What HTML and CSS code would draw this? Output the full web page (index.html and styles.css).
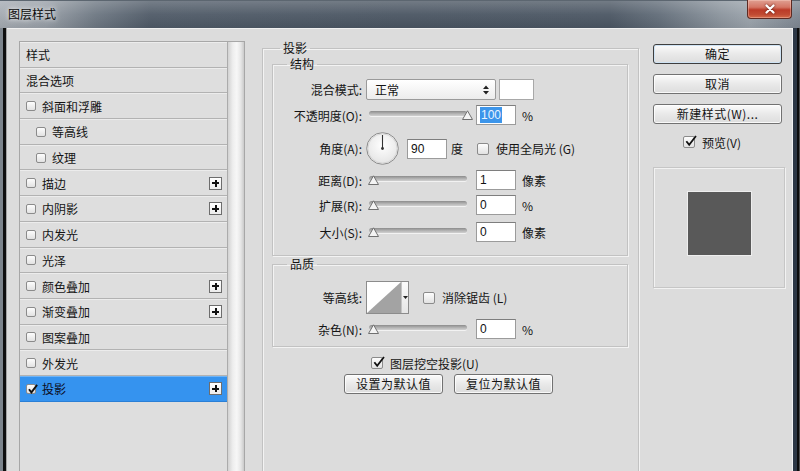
FILE: index.html
```html
<!DOCTYPE html>
<html lang="zh-CN">
<head>
<meta charset="utf-8">
<title>图层样式</title>
<link rel="stylesheet" href="styles.css">
</head>
<body>
<div class="window">
  <div class="titlebar">
    <span class="title">图层样式</span>
    <span class="close"><svg width="12" height="10" viewBox="0 0 12 10"><path d="M2.5 1.5 L9.5 8.5 M9.5 1.5 L2.5 8.5" stroke="#fff" stroke-width="2.2" stroke-linecap="round"/></svg></span>
  </div>
  <div class="frame">
    <div class="frame-left"></div>
    <div class="content">
      <div class="styles-panel">
        <ul class="style-list">
          <li class="style-item">样式</li>
          <li class="style-item">混合选项</li>
          <li class="style-item"><span class="cb"></span>斜面和浮雕</li>
          <li class="style-item sub"><span class="cb"></span>等高线</li>
          <li class="style-item sub"><span class="cb"></span>纹理</li>
          <li class="style-item"><span class="cb"></span>描边<span class="plus"></span></li>
          <li class="style-item"><span class="cb"></span>内阴影<span class="plus"></span></li>
          <li class="style-item"><span class="cb"></span>内发光</li>
          <li class="style-item"><span class="cb"></span>光泽</li>
          <li class="style-item"><span class="cb"></span>颜色叠加<span class="plus"></span></li>
          <li class="style-item"><span class="cb"></span>渐变叠加<span class="plus"></span></li>
          <li class="style-item"><span class="cb"></span>图案叠加</li>
          <li class="style-item"><span class="cb"></span>外发光</li>
          <li class="style-item selected"><span class="cb checked"><svg viewBox="0 0 10 10"><path d="M1.8 4.8 L4 7.6 L9.2 0.8" fill="none" stroke="#111" stroke-width="1.7"/></svg></span>投影<span class="plus"></span></li>
        </ul>
        <div class="scroll-strip"></div>
      </div>

      <fieldset class="group outer">
        <legend class="legend-outer">投影</legend>

        <fieldset class="group inner structure">
          <legend class="legend-inner">结构</legend>
          <div class="row r-blend">
            <span class="lbl">混合模式:</span>
            <div class="select"><span>正常</span><svg width="6" height="10" viewBox="0 0 6 10"><path d="M0 4 L3 0.5 L6 4 Z M0 6 L3 9.5 L6 6 Z" fill="#222"/></svg></div>
            <div class="swatch"></div>
          </div>
          <div class="row r-opacity">
            <span class="lbl">不透明度(O):</span>
            <div class="slider"><div class="track"></div><svg class="thumb max" width="11" height="10" viewBox="0 0 11 10"><path d="M0.5 9.5 L5.5 0.8 L10.5 9.5 Z" fill="#f4f4f4" stroke="#707070"/></svg></div>
            <div class="num"><span class="sel">100</span></div>
            <span class="unit">%</span>
          </div>
          <div class="row r-angle">
            <span class="lbl">角度(A):</span>
            <svg class="dial" width="33" height="33" viewBox="0 0 33 33">
              <defs><radialGradient id="dg" cx="50%" cy="40%" r="60%"><stop offset="0" stop-color="#ffffff"/><stop offset="1" stop-color="#e4e4e4"/></radialGradient></defs>
              <circle cx="16.5" cy="16.5" r="15.8" fill="url(#dg)" stroke="#8c8c8c"/>
              <circle cx="16.5" cy="16.5" r="14.6" fill="none" stroke="#d0d0d0" stroke-width="0.8"/>
              <path d="M16.5 16.5 L16.5 3" stroke="#333" stroke-width="1.1"/>
              <circle cx="16.5" cy="16.5" r="1.4" fill="#333"/>
            </svg>
            <div class="num angle-num">90</div>
            <span class="unit deg">度</span>
            <span class="cb big"></span>
            <span class="cb-text">使用全局光 (G)</span>
          </div>
          <div class="row r-dist">
            <span class="lbl">距离(D):</span>
            <div class="slider"><div class="track"></div><svg class="thumb min" width="11" height="10" viewBox="0 0 11 10"><path d="M0.5 9.5 L5.5 0.8 L10.5 9.5 Z" fill="#f4f4f4" stroke="#707070"/></svg></div>
            <div class="num">1</div>
            <span class="unit">像素</span>
          </div>
          <div class="row r-spread">
            <span class="lbl">扩展(R):</span>
            <div class="slider"><div class="track"></div><svg class="thumb min" width="11" height="10" viewBox="0 0 11 10"><path d="M0.5 9.5 L5.5 0.8 L10.5 9.5 Z" fill="#f4f4f4" stroke="#707070"/></svg></div>
            <div class="num">0</div>
            <span class="unit">%</span>
          </div>
          <div class="row r-size">
            <span class="lbl">大小(S):</span>
            <div class="slider"><div class="track"></div><svg class="thumb min" width="11" height="10" viewBox="0 0 11 10"><path d="M0.5 9.5 L5.5 0.8 L10.5 9.5 Z" fill="#f4f4f4" stroke="#707070"/></svg></div>
            <div class="num">0</div>
            <span class="unit">像素</span>
          </div>
        </fieldset>

        <fieldset class="group inner quality">
          <legend class="legend-inner">品质</legend>
          <div class="row r-contour">
            <span class="lbl">等高线:</span>
            <div class="contour">
              <svg class="curve" width="34" height="31" viewBox="0 0 34 31"><path d="M0 31 L34 0 L34 31 Z" fill="#a3a3a3"/></svg>
              <div class="contour-arrow"><svg width="5" height="3" viewBox="0 0 5 3"><path d="M0 0 L5 0 L2.5 3 Z" fill="#222"/></svg></div>
            </div>
            <span class="cb big"></span>
            <span class="cb-text">消除锯齿 (L)</span>
          </div>
          <div class="row r-noise">
            <span class="lbl">杂色(N):</span>
            <div class="slider"><div class="track"></div><svg class="thumb min" width="11" height="10" viewBox="0 0 11 10"><path d="M0.5 9.5 L5.5 0.8 L10.5 9.5 Z" fill="#f4f4f4" stroke="#707070"/></svg></div>
            <div class="num">0</div>
            <span class="unit">%</span>
          </div>
        </fieldset>

        <div class="knockout">
          <span class="cb big checked"><svg viewBox="0 0 10 10"><path d="M1.8 4.8 L4 7.6 L9.2 0.8" fill="none" stroke="#111" stroke-width="1.4"/></svg></span>
          <span class="cb-text">图层挖空投影(U)</span>
        </div>
        <div class="defaults">
          <button class="btn wide">设置为默认值</button>
          <button class="btn wide">复位为默认值</button>
        </div>
      </fieldset>

      <div class="side">
        <button class="btn default">确定</button>
        <button class="btn">取消</button>
        <button class="btn">新建样式(W)...</button>
        <div class="preview-toggle">
          <span class="cb big checked"><svg viewBox="0 0 10 10"><path d="M1.8 4.8 L4 7.6 L9.2 0.8" fill="none" stroke="#111" stroke-width="1.4"/></svg></span>
          <span class="cb-text">预览(V)</span>
        </div>
        <div class="preview"><div class="preview-square"></div></div>
      </div>
    </div>
    <div class="frame-right"></div>
  </div>
</div>
</body>
</html>
```

FILE: styles.css
```css
html, body {
  margin: 0;
  padding: 0;
}
body {
  width: 800px;
  height: 471px;
  overflow: hidden;
  background: #4b5663;
  font-family: "Noto Sans CJK SC", "Noto Sans", sans-serif;
  font-size: 12px;
  color: #141414;
}
.window {
  width: 800px;
  height: 471px;
  display: flex;
  flex-direction: column;
}
.titlebar {
  height: 28px;
  flex: none;
  display: flex;
  align-items: flex-start;
  justify-content: space-between;
  background:
    linear-gradient(180deg, rgba(255,255,255,0.22) 0, rgba(255,255,255,0.05) 50%, rgba(0,0,0,0.05) 100%),
    linear-gradient(90deg, #a4aab1 0, #979ea6 45px, #6d7782 95px, #4f5a67 150px, #4a5562 400px, #4b5663 610px, #626d79 660px, #8a939c 720px, #9aa2aa 750px, #7d8691 800px);
  border-top: 1px solid #5c6670;
  box-sizing: border-box;
}
.title {
  margin: 5px 0 0 8px;
  font-size: 12px;
  line-height: 16px;
  color: #0a0a0a;
  text-shadow: 0 0 4px rgba(255,255,255,0.9), 0 0 8px rgba(255,255,255,0.6);
}
.close {
  width: 45px;
  height: 19px;
  margin: -1px 8px 0 0;
  box-sizing: border-box;
  display: flex;
  align-items: center;
  justify-content: center;
  border: 1px solid #5d2a22;
  border-top: none;
  border-radius: 0 0 4px 4px;
  background: linear-gradient(180deg, #e0a092 0, #d47564 40%, #bb3a27 55%, #c04a32 80%, #d56a48 100%);
  box-shadow: inset 0 0 0 1px rgba(255,220,210,0.35);
}
.close svg { filter: drop-shadow(0 0 1px #5a1a10); }

.frame {
  flex: 1;
  display: flex;
  min-height: 0;
}
.frame-left {
  width: 7px;
  flex: none;
  background: linear-gradient(90deg, #7c848c 0, #7c848c 3px, #0f0f0f 3px, #0f0f0f 6px, #a4a4a4 6px);
}
.frame-right {
  width: 8px;
  flex: none;
  background: linear-gradient(90deg, #f2f2f2 0, #f2f2f2 1px, #2d3846 1px, #2d3846 5px, #0c0c0c 5px, #0c0c0c 7px, #4c4c4c 7px);
}
.content {
  flex: 1;
  background: #dcdcdc;
  border-top: 1px solid #f0f0f0;
  box-sizing: border-box;
  display: grid;
  grid-template-columns: 226px 377px 129px;
  column-gap: 17px;
  align-items: start;
  padding: 11px 0 0 12px;
  overflow: hidden;
}
.content > .side { margin-left: -3px; }

/* ---------- left list ---------- */
.styles-panel {
  margin-top: 1px;
  height: 460px;
  display: flex;
  border: 1px solid #a7a7a7;
  box-sizing: border-box;
  background: #dedede;
}
.style-list {
  list-style: none;
  margin: 0;
  padding: 0;
  flex: 1;
  border-right: 1px solid #ababab;
}
.style-item {
  height: 25.7px;
  box-sizing: border-box;
  display: flex;
  align-items: center;
  padding-left: 6px;
  border-top: 1px solid #ececec;
  border-bottom: 1px solid #b2b2b2;
  background: #dedede;
  white-space: nowrap;
}
.style-item.sub { padding-left: 16px; }
.style-item .cb { margin-right: 6px; }
.style-item.selected {
  background: #3593ef;
  border-top-color: #6fb4f6;
  border-bottom-color: #2a7fd6;
  color: #0c0c22;
}
.plus {
  margin-left: auto;
  margin-right: 5px;
  width: 13px;
  height: 13px;
  box-sizing: border-box;
  border: 1px solid #6d6d6d;
  background:
    linear-gradient(#111, #111) center / 7px 2px no-repeat,
    linear-gradient(#111, #111) center / 2px 7px no-repeat,
    linear-gradient(#ffffff, #ececec);
}
.scroll-strip {
  width: 16px;
  flex: none;
  background: linear-gradient(90deg, #d2d2d2 0, #eeeeee 30%, #f7f7f7 55%, #e6e6e6 80%, #cacaca 100%);
}

/* ---------- checkboxes ---------- */
.cb {
  width: 10px;
  height: 10px;
  flex: none;
  box-sizing: border-box;
  border: 1px solid #8b8b8b;
  border-radius: 2px;
  background: linear-gradient(#fdfdfd, #e2e2e2);
  position: relative;
  display: inline-block;
}
.cb.big {
  width: 12px;
  height: 12px;
}
.cb svg {
  position: absolute;
  left: 0;
  top: -1px;
  width: 11px;
  height: 11px;
}
.cb.big svg {
  left: 0;
  top: -2px;
  width: 13px;
  height: 13px;
}
.cb-text { margin-left: 7px; white-space: nowrap; }

/* ---------- group boxes ---------- */
fieldset.group {
  margin: 0;
  min-width: 0;
  border: 1px solid #c2c2c2;
  box-shadow: inset 1px 1px 0 #f3f3f3, 1px 1px 0 #f3f3f3;
}
legend {
  padding: 0 3px;
  font-size: 12px;
  line-height: 16px;
  color: #141414;
}
.outer {
  padding: 0 10px 0 9px;
  height: 460px;
  box-sizing: border-box;
}
.legend-outer { margin-left: 8px; }
.inner { padding: 7px 0 13px 0; }
.structure { margin-top: 1px; }
.legend-inner { margin-left: 14px; }
.quality {
  margin-top: 2px;
  padding: 9px 0 7px 0;
}

.row {
  display: flex;
  align-items: center;
}
.lbl {
  width: 89px;
  flex: none;
  text-align: right;
  margin-right: 4px;
  white-space: nowrap;
}
.r-opacity { margin-top: 5px; }
.r-angle { margin-top: 7px; }
.r-dist { margin-top: 5px; }
.r-spread { margin-top: 5px; }
.r-size { margin-top: 7px; }
.r-noise { margin-top: 5px; }

.select {
  width: 130px;
  height: 21px;
  box-sizing: border-box;
  border: 1px solid #9a9a9a;
  border-radius: 2px;
  background: linear-gradient(#ffffff, #ececec);
  display: flex;
  align-items: center;
  justify-content: space-between;
  padding: 0 6px 0 8px;
}
.swatch {
  width: 35px;
  height: 21px;
  margin-left: 3px;
  box-sizing: border-box;
  border: 1px solid #a8a8a8;
  background: #ffffff;
}
.slider {
  position: relative;
  width: 104px;
  height: 20px;
  flex: none;
}
.track {
  margin: 6px 3px 0 3px;
  height: 5px;
  border-radius: 3px;
  background: linear-gradient(#8c8c8c, #b8b8b8 60%, #d0d0d0);
  box-shadow: 0 1px 0 #f2f2f2;
}
.thumb {
  position: absolute;
  top: 5px;
}
.thumb.min { left: 2px; }
.thumb.max { left: 96px; }
.num {
  width: 40px;
  height: 20px;
  box-sizing: border-box;
  margin-left: 6px;
  border: 1px solid #9b9b9b;
  border-top-color: #7e7e7e;
  background: #fff;
  font-family: "Liberation Sans", Arial, sans-serif;
  font-size: 12px;
  line-height: 18px;
  padding-left: 3px;
  color: #111;
}
.sel {
  background: #3c95ea;
  color: #eaf4ff;
  padding: 1px 1px;
}
.unit { margin-left: 6px; white-space: nowrap; }
.dial { flex: none; }
.angle-num { margin-left: 8px; }
.unit.deg { margin-left: 4px; margin-right: 14px; }

.contour {
  display: flex;
  height: 33px;
  box-sizing: border-box;
  border: 1px solid #8c8c8c;
  background: #fff;
}
.curve { display: block; }
.contour-arrow {
  width: 6px;
  border-left: 1px solid #c4c4c4;
  background: linear-gradient(#fbfbfb, #e6e6e6);
  display: flex;
  align-items: center;
  justify-content: center;
}
.r-contour .cb { margin-left: 14px; }

.knockout {
  display: flex;
  align-items: center;
  margin: 8px 0 0 99px;
  height: 16px;
}
.defaults {
  display: flex;
  gap: 11px;
  margin: 3px 0 0 72px;
}

/* ---------- buttons ---------- */
.btn {
  height: 20px;
  box-sizing: border-box;
  border: 1px solid #727272;
  border-radius: 3px;
  background: linear-gradient(#fbfbfb, #e9e9e9 50%, #dddddd);
  box-shadow: inset 0 0 0 1px rgba(255,255,255,0.8);
  font-family: "Noto Sans CJK SC", "Noto Sans", sans-serif;
  font-size: 12px;
  line-height: 16px;
  color: #141414;
  padding: 0;
  letter-spacing: 0.5px;
}
.btn.wide { width: 99px; }
.btn.default {
  border-color: #3e3e3e;
  box-shadow: inset 0 0 0 1px #cfe3f4;
}

.side {
  display: flex;
  flex-direction: column;
  margin-top: 4px;
}
.side .btn { width: 129px; margin-bottom: 10px; }
.preview-toggle {
  display: flex;
  align-items: center;
  margin: 1px 0 0 30px;
  height: 14px;
}
.preview {
  margin-top: 18px;
  height: 121px;
  box-sizing: border-box;
  border: 1px solid #c6c6c6;
  box-shadow: inset 1px 1px 0 #f2f2f2, 1px 1px 0 #f2f2f2;
  padding-top: 24px;
  display: flex;
  justify-content: center;
  align-items: flex-start;
}
.preview-square {
  width: 63px;
  height: 63px;
  box-sizing: border-box;
  background: #595959;
  box-shadow: 0 0 0 1px #eeeeee;
}
```
